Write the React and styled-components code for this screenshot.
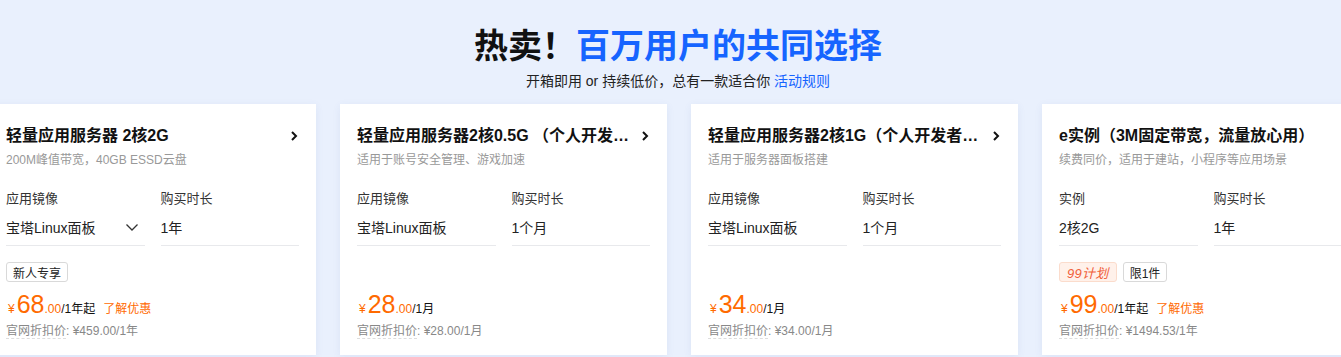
import React from 'react';
import styled, { createGlobalStyle } from 'styled-components';

const Global = createGlobalStyle`
  body {
    margin: 0;
    background: #e9f0fd;
    font-family: "Liberation Sans", "Noto Sans CJK SC", sans-serif;
    color: #1a1a1a;
    overflow: hidden;
  }
`;

const Page = styled.div`
  width: 1341px;
  height: 357px;
  overflow: hidden;
`;

const Header = styled.div`
  display: flex;
  flex-direction: column;
  align-items: center;
  padding: 26px 0 0 15px;
`;

const Heading = styled.h1`
  margin: 0;
  font-size: 34px;
  line-height: 40px;
  font-weight: 700;
  color: #111;
  span { color: #1664ff; }
`;

const Sub = styled.p`
  margin: 5px 0 0;
  font-size: 14px;
  line-height: 20px;
  color: #222;
  a { color: #1664ff; text-decoration: none; }
`;

const Row = styled.div`
  display: flex;
  gap: 24px;
  margin-top: 13px;
  margin-left: -11px;
`;

const Card = styled.div`
  flex: 0 0 327px;
  box-sizing: border-box;
  height: 251px;
  background: #fff;
  padding: 20px 17px 0;
  box-shadow: 0 2px 8px rgba(60, 90, 160, 0.08);
`;

const TitleRow = styled.div`
  display: flex;
  align-items: center;
  justify-content: space-between;
  height: 24px;
`;

const Title = styled.div`
  font-size: 16px;
  font-weight: 700;
  line-height: 24px;
  white-space: nowrap;
  overflow: hidden;
  text-overflow: ellipsis;
  max-width: 276px;
  color: #111;
`;

const Desc = styled.div`
  margin-top: 3px;
  font-size: 12px;
  line-height: 18px;
  color: #999;
  white-space: nowrap;
`;

const Fields = styled.div`
  display: grid;
  grid-template-columns: 1fr 1fr;
  column-gap: 16px;
  margin-top: 20px;
`;

const Label = styled.div`
  font-size: 13px;
  line-height: 20px;
  color: #333;
`;

const Value = styled.div`
  display: flex;
  align-items: center;
  justify-content: space-between;
  height: 36px;
  border-bottom: 1px solid #e8e9ec;
  font-size: 14px;
  color: #222;
  padding-right: 6px;
`;

const Tags = styled.div`
  display: flex;
  gap: 6px;
  height: 20px;
  margin-top: 16px;
`;

const Tag = styled.span`
  display: inline-flex;
  align-items: center;
  box-sizing: border-box;
  height: 20px;
  padding: 0 ${p => (p.hot ? '7px' : '6px')};
  border-radius: 3px;
  font-size: ${p => (p.hot ? '13px' : '12px')};
  border: 1px solid ${p => (p.hot ? '#fbdccc' : '#d9d9d9')};
  background: ${p => (p.hot ? '#fff1ea' : '#fff')};
  color: ${p => (p.hot ? '#f0603a' : '#222')};
  font-style: ${p => (p.hot ? 'italic' : 'normal')};
  letter-spacing: ${p => (p.hot ? '0.3px' : '0')};
`;

const Price = styled.div`
  display: flex;
  align-items: baseline;
  margin-top: 6px;
  height: 32px;
  line-height: 32px;
  color: #ff6a00;
  padding-left: 2px;
`;

const Yen = styled.span`
  font-size: 12px;
  margin-right: 2px;
`;

const Big = styled.span`
  font-size: 25px;
`;

const Small = styled.span`
  font-size: 12px;
`;

const Unit = styled.span`
  font-size: 12px;
  color: #111;
`;

const Promo = styled.span`
  font-size: 12px;
  margin-left: 8px;
  color: #ff6a00;
`;

const Origin = styled.div`
  margin-top: 2px;
  font-size: 12px;
  line-height: 18px;
  color: #888;
  span { border-bottom: 1px dashed #ddd; }
`;

const ArrowRight = () => (
  <svg width="10" height="12" viewBox="0 0 10 12">
    <path d="M3 2 L7 6 L3 10" fill="none" stroke="#111" strokeWidth="2" />
  </svg>
);

const ChevronDown = () => (
  <svg width="14" height="10" viewBox="0 0 14 10">
    <path d="M1.5 2.5 L7 8 L12.5 2.5" fill="none" stroke="#333" strokeWidth="1.3" />
  </svg>
);

const cards = [
  {
    title: '轻量应用服务器 2核2G',
    desc: '200M峰值带宽，40GB ESSD云盘',
    f1: ['应用镜像', '宝塔Linux面板', true],
    f2: ['购买时长', '1年'],
    tags: [{ text: '新人专享' }],
    price: '68', unit: '/1年起', promo: true,
    origin: '¥459.00/1年',
  },
  {
    title: '轻量应用服务器2核0.5G （个人开发者专享）',
    desc: '适用于账号安全管理、游戏加速',
    f1: ['应用镜像', '宝塔Linux面板'],
    f2: ['购买时长', '1个月'],
    tags: [],
    price: '28', unit: '/1月',
    origin: '¥28.00/1月',
  },
  {
    title: '轻量应用服务器2核1G（个人开发者专享）',
    desc: '适用于服务器面板搭建',
    f1: ['应用镜像', '宝塔Linux面板'],
    f2: ['购买时长', '1个月'],
    tags: [],
    price: '34', unit: '/1月',
    origin: '¥34.00/1月',
  },
  {
    title: 'e实例（3M固定带宽，流量放心用）',
    desc: '续费同价，适用于建站，小程序等应用场景',
    f1: ['实例', '2核2G'],
    f2: ['购买时长', '1年'],
    tags: [{ text: '99计划', hot: true }, { text: '限1件' }],
    price: '99', unit: '/1年起', promo: true,
    origin: '¥1494.53/1年',
  },
];

export default function App() {
  return (
    <Page>
      <Global />
      <Header>
        <Heading>热卖！<span>百万用户的共同选择</span></Heading>
        <Sub>开箱即用 or 持续低价，总有一款适合你 <a href="#">活动规则</a></Sub>
      </Header>
      <Row>
        {cards.map(c => (
          <Card key={c.title}>
            <TitleRow>
              <Title>{c.title}</Title>
              <ArrowRight />
            </TitleRow>
            <Desc>{c.desc}</Desc>
            <Fields>
              <Label>{c.f1[0]}</Label>
              <Label>{c.f2[0]}</Label>
              <Value>{c.f1[1]}{c.f1[2] && <ChevronDown />}</Value>
              <Value>{c.f2[1]}</Value>
            </Fields>
            <Tags>
              {c.tags.map(t => (
                <Tag key={t.text} hot={t.hot}>{t.text}</Tag>
              ))}
            </Tags>
            <Price>
              <Yen>¥</Yen>
              <Big>{c.price}</Big>
              <Small>.00</Small>
              <Unit>{c.unit}</Unit>
              {c.promo && <Promo>了解优惠</Promo>}
            </Price>
            <Origin><span>官网折扣价</span>: {c.origin}</Origin>
          </Card>
        ))}
      </Row>
    </Page>
  );
}
